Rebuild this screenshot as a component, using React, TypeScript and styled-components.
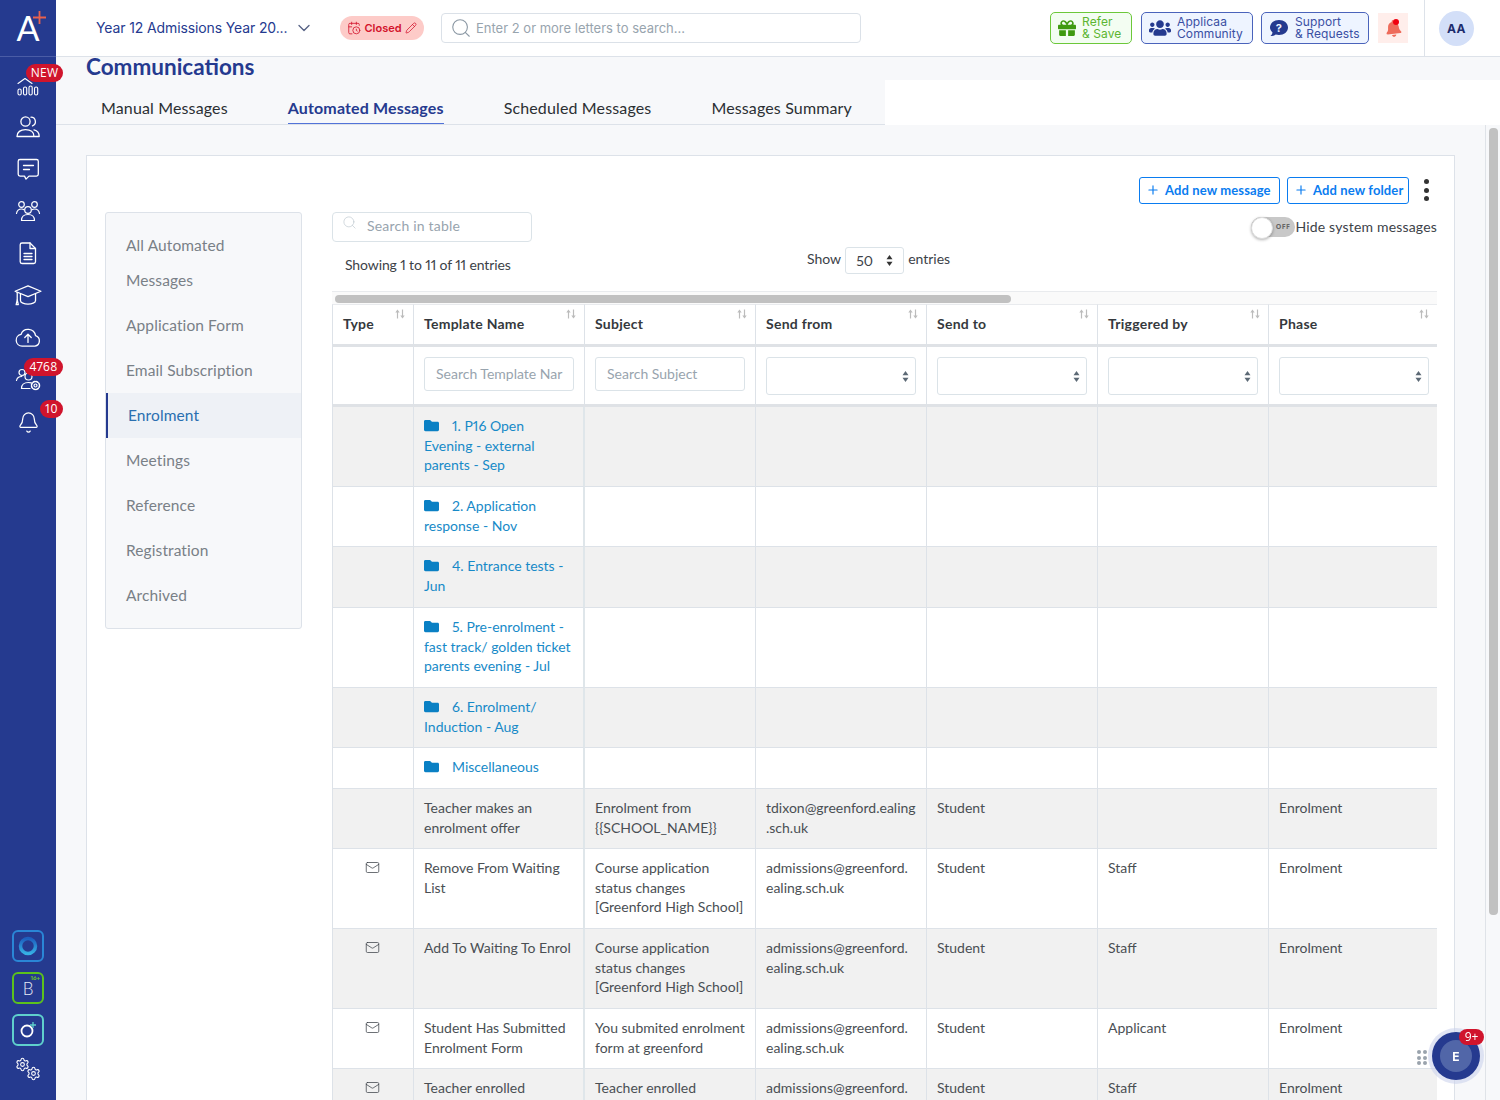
import React from 'react';
import styled, { createGlobalStyle } from 'styled-components';
import { Bell, CalendarClock, ChevronDown, Mail, Pencil, Plus, Search, Settings } from 'lucide-react';
import { FaBell, FaFolder, FaGift, FaUsers } from 'react-icons/fa';

const GlobalStyle = createGlobalStyle`
  html, body { margin: 0; padding: 0; height: 100%; overflow: hidden; }
  body { font-family: Lato, "Open Sans", sans-serif; font-size: 14px; color: #3c4248; background: #f7f8fa; font-variant-numeric: proportional-nums; }
  * { box-sizing: border-box; }
`;

/* ---------- shell ---------- */
const Shell = styled.div`
  display: flex;
  width: 1500px;
  height: 1100px;
  overflow: hidden;
`;

const Side = styled.aside`
  width: 56px;
  flex: none;
  background: #253a8f;
  display: flex;
  flex-direction: column;
  align-items: center;
  padding-bottom: 16px;
`;

const Logo = styled.div`
  width: 100%;
  height: 57px;
  flex: none;
  border-bottom: 1px solid #4a5ca6;
  display: flex;
  align-items: center;
  justify-content: center;
  margin-bottom: 7px;
  position: relative;
`;

const LogoMark = styled.span`
  font-family: Lato, sans-serif;
  font-weight: 400;
  font-size: 34px;
  line-height: 36px;
  color: #fff;
`;

const LogoPlus = styled.svg`
  position: absolute;
  left: 33px;
  top: 11px;
`;

const NavItem = styled.div`
  position: relative;
  width: 100%;
  height: 42px;
  flex: none;
  display: flex;
  align-items: center;
  justify-content: center;
  color: #fff;
`;

const NavBadge = styled.span<{ $w: number }>`
  position: absolute;
  right: -7px;
  top: 0;
  width: ${p => p.$w}px;
  height: 18px;
  border-radius: 9px;
  background: #d0142c;
  color: #fff;
  font-family: "Open Sans", sans-serif;
  font-size: 12px;
  line-height: 18px;
  letter-spacing: 0.3px;
  text-align: center;
  z-index: 2;
`;

const NavBell = styled(Bell)`
  margin-top: 3px;
`;

const NavFoot = styled.div`
  margin-top: auto;
  width: 100%;
  display: flex;
  flex-direction: column;
  align-items: center;
`;

const AppTile = styled.div<{ $c: string }>`
  width: 32px;
  height: 32px;
  border: 2px solid ${p => p.$c};
  border-radius: 6px;
  margin-bottom: 10px;
  display: flex;
  align-items: center;
  justify-content: center;
  color: #e6e9f5;
  font-size: 17px;
  font-weight: 300;
  position: relative;
`;

const TinyMark = styled.span`
  position: absolute;
  top: 0;
  right: 2px;
  font-size: 6px;
  line-height: 8px;
  font-weight: 700;
  color: #6fce22;
`;

const Main = styled.div`
  flex: 1;
  min-width: 0;
  display: flex;
  flex-direction: column;
`;

/* ---------- top bar ---------- */
const TopBar = styled.header`
  height: 57px;
  flex: none;
  background: #fff;
  border-bottom: 1px solid #dde2e9;
  display: flex;
  align-items: center;
  padding-left: 40px;
`;

const YearSelect = styled.div`
  display: flex;
  align-items: center;
  gap: 7px;
  width: 244px;
  margin-top: -1px;
  font-family: Inter, sans-serif;
  font-size: 14px;
  letter-spacing: -0.12px;
  color: #253a8f;
  white-space: nowrap;
`;

const ClosedPill = styled.div`
  width: 84px;
  height: 24px;
  border-radius: 12px;
  background: #fdcbc8;
  color: #d3132c;
  display: flex;
  align-items: center;
  justify-content: center;
  gap: 3px;
  font-family: Inter, sans-serif;
  font-size: 11px;
  font-weight: 600;
  margin-right: 17px;
`;

const TopSearch = styled.div`
  width: 420px;
  height: 30px;
  border: 1px solid #dbe1e8;
  border-radius: 4px;
  display: flex;
  align-items: center;
  gap: 4px;
  padding-left: 8px;
  color: #98a4ae;
  font-family: Inter, sans-serif;
  font-size: 13px;
`;

const TopLinks = styled.div`
  margin-left: auto;
  display: flex;
  align-items: center;
  height: 100%;
`;

const LinkBtn = styled.div<{ $w: number; $mr: number; $green?: boolean }>`
  width: ${p => p.$w}px;
  height: 32px;
  margin-right: ${p => p.$mr}px;
  border: 1px solid ${p => (p.$green ? '#6cc83a' : '#4a63bb')};
  border-radius: 5px;
  background: ${p => (p.$green ? '#f3fdf2' : '#eef4ff')};
  color: ${p => (p.$green ? '#5cb531' : '#3a4fa3')};
  display: flex;
  align-items: center;
  gap: 6px;
  padding-left: 7px;
  font-family: Inter, sans-serif;
  font-size: 12px;
  line-height: 12px;
  letter-spacing: 0.1px;
`;

const BellBox = styled.div`
  position: relative;
  width: 30px;
  height: 30px;
  background: #ffeeeb;
  color: #ee6c5b;
  display: flex;
  align-items: center;
  justify-content: center;
  margin-right: 16px;
`;

const BellDot = styled.span`
  position: absolute;
  top: 6px;
  right: 9px;
  width: 6px;
  height: 6px;
  border-radius: 50%;
  background: #f0000f;
`;

const AvatarCell = styled.div`
  height: 100%;
  width: 76px;
  border-left: 1px solid #dde2e9;
  display: flex;
  align-items: center;
  padding-left: 14px;
`;

const Avatar = styled.div`
  width: 35px;
  height: 35px;
  border-radius: 50%;
  background: #d3dff8;
  color: #1d2c6d;
  font-family: Inter, sans-serif;
  font-size: 12px;
  font-weight: 700;
  display: flex;
  align-items: center;
  justify-content: center;
  letter-spacing: 0.5px;
`;

/* ---------- page head ---------- */
const TitleBand = styled.div`
  height: 23px;
  flex: none;
  padding-left: 30px;
  background: #f7f8fa;
`;

const Title = styled.h1`
  margin: 0;
  font-size: 22.5px;
  line-height: 19px;
  font-weight: 700;
  color: #253a8f;
`;

const TabBand = styled.div`
  height: 45px;
  flex: none;
  display: flex;
  background: #fff;
`;

const Tabs = styled.nav`
  width: 829px;
  background: #f7f8fa;
  border-bottom: 1px solid #dde2e9;
  display: flex;
  gap: 60px;
  padding-left: 45px;
`;

const Tab = styled.div<{ $active?: boolean }>`
  height: 44px;
  padding-top: 18px;
  font-size: 16px;
  line-height: 20px;
  letter-spacing: 0.14px;
  white-space: nowrap;
  color: ${p => (p.$active ? '#253a8f' : '#2b2f33')};
  font-weight: ${p => (p.$active ? 700 : 400)};
  border-bottom: ${p => (p.$active ? '1px solid #5273d8' : 'none')};
`;

const Body = styled.div`
  flex: 1;
  min-height: 0;
  display: flex;
`;

const Scroller = styled.div`
  flex: 1;
  min-width: 0;
  padding: 30px 30px 0 30px;
  overflow: hidden;
`;

const Rail = styled.div`
  width: 15px;
  flex: none;
  border-left: 1px solid #dfe3e8;
  padding: 3px 2px 0 3px;
`;

const RailThumb = styled.div`
  height: 787px;
  border-radius: 4px;
  background: #c1c1c1;
`;

/* ---------- card ---------- */
const Card = styled.section`
  background: #fff;
  border: 1px solid #dde2e9;
  min-height: 1000px;
  padding: 21px 17px 0 18px;
`;

const Actions = styled.div`
  height: 35px;
  display: flex;
  justify-content: flex-end;
  align-items: flex-start;
  gap: 7px;
  padding-right: 28px;
  position: relative;
`;

const AddBtn = styled.div<{ $w: number }>`
  width: ${p => p.$w}px;
  height: 27px;
  padding: 0 0 1px 6px;
  border: 1px solid #0a7cf0;
  border-radius: 3px;
  color: #0a7cf0;
  display: flex;
  align-items: center;
  gap: 5px;
  font-size: 13px;
  font-weight: 700;
  letter-spacing: 0.12px;
  white-space: nowrap;
`;

const Dots = styled.div`
  position: absolute;
  right: 8px;
  top: 2px;
  display: flex;
  flex-direction: column;
  gap: 3.5px;
  & span { width: 5px; height: 5px; border-radius: 50%; background: #333; }
`;

const Columns = styled.div`
  display: flex;
  gap: 30px;
  align-items: flex-start;
`;

const Menu = styled.div`
  width: 197px;
  flex: none;
  background: #f7f8fa;
  border: 1px solid #dde2e9;
  border-radius: 3px;
  padding: 9.5px 0 10.5px;
`;

const MenuItem = styled.div<{ $active?: boolean }>`
  padding: 5px 20px;
  font-size: 15.5px;
  line-height: 35px;
  letter-spacing: 0.1px;
  color: ${p => (p.$active ? '#2a6fb0' : '#798087')};
  background: ${p => (p.$active ? '#eef1f6' : 'transparent')};
  border-left: ${p => (p.$active ? '2px solid #253a8f' : 'none')};
`;

const Content = styled.div`
  width: 1105px;
  flex: none;
`;

const Controls = styled.div`
  height: 79px;
  display: flex;
`;

const LeftCtl = styled.div`
  width: 475px;
  flex: none;
`;

const TableSearch = styled.div`
  width: 200px;
  height: 30px;
  border: 1px solid #dbe3e8;
  border-radius: 4px;
  display: flex;
  align-items: flex-start;
  gap: 10px;
  padding: 2px 0 0 9px;
  color: #98a4ae;
  font-size: 14px;
  line-height: 22px;
  letter-spacing: 0.2px;
`;

const EntriesInfo = styled.div`
  margin: 13px 0 0 13px;
  font-size: 14px;
  line-height: 19px;
  letter-spacing: -0.12px;
  color: #3c4248;
`;

const ShowCtl = styled.div`
  margin-top: 35px;
  height: 27px;
  display: flex;
  align-items: flex-start;
  gap: 4px;
  font-size: 14px;
  line-height: 24px;
`;

const ShowSelect = styled.div`
  width: 59px;
  height: 27px;
  border: 1px solid #dbe3e8;
  border-radius: 3px;
  display: flex;
  align-items: center;
  justify-content: space-between;
  padding: 0 10px;
  font-size: 14px;
`;

const ToggleCtl = styled.div`
  margin-left: auto;
  margin-top: 5px;
  height: 20px;
  display: flex;
  align-items: center;
  font-size: 14px;
  line-height: 18px;
  letter-spacing: 0.18px;
  white-space: nowrap;
`;

const Toggle = styled.div`
  width: 44px;
  height: 20px;
  border-radius: 10px;
  background: #c8c8c8;
  position: relative;
  font-family: "Open Sans", sans-serif;
  font-size: 7px;
  font-weight: 700;
  line-height: 20px;
  color: #666;
  text-align: right;
  padding-right: 5px;
  letter-spacing: 0.5px;
  &::before {
    content: '';
    position: absolute;
    left: 0;
    top: 0;
    width: 20px;
    height: 20px;
    border-radius: 50%;
    background: #fff;
    border: 1px solid #ddd;
    box-shadow: 0 1px 3px rgba(0, 0, 0, 0.3);
  }
`;

const HScroll = styled.div`
  height: 13px;
  background: #fafafa;
  border-top: 1px solid #e9ebee;
  padding: 3px 0 0 3px;
`;

const HThumb = styled.div`
  width: 676px;
  height: 8px;
  border-radius: 4px;
  background: #c1c1c1;
`;

/* ---------- table ---------- */
const Table = styled.table`
  width: 1105px;
  table-layout: fixed;
  border-collapse: separate;
  border-spacing: 0;
  font-size: 14px;
  line-height: 19.5px;
  color: #4a4f54;
`;

const Th = styled.th`
  height: 43px;
  padding: 0 8px 2px 10px;
  border-top: 1px solid #e9ebee;
  border-right: 1px solid #dde2e8;
  border-bottom: 3px solid #dfe2e6;
  text-align: left;
  color: #35393d;
  font-weight: 700;
  letter-spacing: 0.25px;
  &:first-child { border-left: 1px solid #dde2e8; }
  &:last-child { border-right: none; }
`;

const ThInner = styled.div`
  display: flex;
  justify-content: space-between;
  align-items: flex-start;
`;

const SortMark = styled.svg`
  margin-top: -5px;
  flex: none;
`;

const FilterTd = styled.td`
  height: 60px;
  padding: 10px 10px 0;
  vertical-align: top;
  border-right: 1px solid #dde2e8;
  border-bottom: 3px solid #dfe2e6;
  &:first-child { border-left: 1px solid #dde2e8; }
  &:last-child { border-right: none; padding-right: 8px; }
`;

const FilterInput = styled.div`
  height: 34px;
  border: 1px solid #dbe3e8;
  border-radius: 3px;
  padding: 0 10px 0 11px;
  font-size: 14px;
  line-height: 32px;
  color: #98a4ae;
  white-space: nowrap;
  overflow: hidden;
`;

const FilterSelect = styled.div`
  height: 38px;
  border: 1px solid #dbe3e8;
  border-radius: 3px;
  display: flex;
  align-items: center;
  justify-content: flex-end;
  padding-right: 6px;
`;

const Tr = styled.tr<{ $shade: boolean; $h: number }>`
  height: ${p => p.$h}px;
  background: ${p => (p.$shade ? '#f1f1f1' : '#fff')};
`;

const Td = styled.td<{ $wide?: boolean; $center?: boolean }>`
  padding: 9px 10px 0;
  vertical-align: top;
  border-right: ${p => (p.$wide ? '2px solid #dfe6ea' : '1px solid #dde2e8')};
  border-bottom: 1px solid #dde2e8;
  text-align: ${p => (p.$center ? 'center' : 'left')};
  white-space: nowrap;
  &:first-child { border-left: 1px solid #dde2e8; }
  &:last-child { border-right: none; }
`;

const MailGlyph = styled(Mail)`
  margin: 2px 1px 0 0;
`;

const FolderLink = styled.span`
  color: #178ac8;
`;

const FolderGlyph = styled(FaFolder)`
  color: #0a80c4;
  width: 15px;
  height: 15px;
  margin-right: 13px;
  vertical-align: -2px;
`;

/* ---------- floating chat ---------- */
const Chat = styled.div`
  position: fixed;
  left: 1432px;
  top: 1032px;
  width: 48px;
  height: 48px;
  border-radius: 50%;
  background: #253a8f;
  box-shadow: 0 0 0 4px rgba(200, 208, 235, 0.55);
  display: flex;
  align-items: center;
  justify-content: center;
`;

const ChatInner = styled.div`
  width: 32px;
  height: 32px;
  border-radius: 50%;
  background: #5166a8;
  color: #fff;
  font-family: Inter, sans-serif;
  font-size: 12px;
  font-weight: 700;
  display: flex;
  align-items: center;
  justify-content: center;
`;

const ChatBadge = styled.span`
  position: absolute;
  left: 27px;
  top: -3px;
  width: 25px;
  height: 16px;
  border-radius: 8px;
  background: #d0142c;
  color: #fff;
  font-family: "Open Sans", sans-serif;
  font-size: 12px;
  line-height: 16px;
  text-align: center;
`;

const Grip = styled.div`
  position: fixed;
  left: 1417px;
  top: 1050px;
  display: grid;
  grid-template-columns: repeat(2, 4px);
  gap: 1.5px 2px;
  & span { width: 4px; height: 4px; border-radius: 50%; background: #9aa3ad; }
`;

/* ---------- icons ---------- */
const Ico: React.FC<{ children: React.ReactNode; size?: number; sw?: number }> = ({ children, size = 26, sw = 1.3 }) => (
  <svg width={size} height={size} viewBox="0 0 26 26" fill="none" stroke="currentColor" strokeWidth={sw} strokeLinecap="round" strokeLinejoin="round">
    {children}
  </svg>
);

const SortArrows = () => (
  <SortMark width="10" height="10" viewBox="0 0 10 10" fill="#bcbcbc" stroke="#bcbcbc">
    <path d="M2.5 9.5V2" strokeWidth="1.2" />
    <path d="M0.3 3.4L2.5 0.6l2.2 2.8z" stroke="none" />
    <path d="M7.5 0.5V8" strokeWidth="1.2" />
    <path d="M5.3 6.6L7.5 9.4l2.2-2.8z" stroke="none" />
  </SortMark>
);

const UpDown = ({ color = '#5c6975' }: { color?: string }) => (
  <svg width="7" height="13" viewBox="0 0 7 13" fill={color}>
    <path d="M3.5 1L6.5 5.3H.5z" />
    <path d="M3.5 12L.5 7.7h6z" />
  </svg>
);

const navIcons: { icon: React.ReactNode; badge?: string; w?: number }[] = [
  {
    badge: 'NEW',
    w: 37,
    icon: (
      <Ico sw={1.1}>
        <path d="M3 11.500l7-5 7 5" />
        <rect x="3" y="17" width="3.200" height="6" rx="1.600" />
        <rect x="8.500" y="15" width="3.200" height="8" rx="1.600" />
        <rect x="14" y="14" width="3.200" height="9" rx="1.600" />
        <rect x="19.500" y="15" width="3.200" height="8" rx="1.600" />
      </Ico>
    ),
  },
  {
    icon: (
      <Ico>
        <circle cx="10.500" cy="7.500" r="4.600" />
        <path d="M2 22.500c0-4.600 3.500-6.800 8.500-6.800s8.500 2.200 8.500 6.800z" />
        <path d="M16 3.200a4.500 4.500 0 0 1 1.500 8.700" />
        <path d="M19 15.800c3 .7 5.200 3 5.200 6.700H19.500" />
      </Ico>
    ),
  },
  {
    icon: (
      <Ico>
        <path d="M5 3.500h16.500a1.800 1.800 0 0 1 1.800 1.800v13a1.800 1.800 0 0 1-1.800 1.800H14l-3 3-1.500-3H5a1.800 1.800 0 0 1-1.800-1.800v-13A1.800 1.800 0 0 1 5 3.500z" />
        <path d="M8.500 9.500h10M8.500 13.500h6" />
      </Ico>
    ),
  },
  {
    icon: (
      <Ico sw={1.2}>
        <circle cx="6.500" cy="6.500" r="2.800" />
        <circle cx="19.500" cy="6.500" r="2.800" />
        <circle cx="13" cy="12" r="3.300" />
        <path d="M1.500 15.500c.5-3 2.500-4.500 5-4.500 1 0 1.800.2 2.500.7" />
        <path d="M24.500 15.500c-.5-3-2.500-4.500-5-4.500-1 0-1.800.2-2.500.7" />
        <path d="M6.500 22.500c0-4 2.700-6 6.500-6s6.500 2 6.500 6z" />
      </Ico>
    ),
  },
  {
    icon: (
      <Ico>
        <path d="M7 3h8l5.500 5.500v13.200a1.800 1.800 0 0 1-1.800 1.800H7a1.800 1.800 0 0 1-1.800-1.800V4.800A1.800 1.800 0 0 1 7 3z" />
        <path d="M15 3v5.500h5.500" />
        <path d="M9 13.500h8M9 16.500h8M9 19.500h8" />
      </Ico>
    ),
  },
  {
    icon: (
      <Ico size={28} sw={1.2}>
        <path d="M13 4.500L25 9.500 13 14.500 1 9.500z" />
        <path d="M6 12v6c0 2.200 3.500 3.500 7 3.500s7-1.300 7-3.500v-6" />
        <path d="M3 10.500v7" />
        <path d="M2 22l1-4.500 1 4.500z" />
      </Ico>
    ),
  },
  {
    icon: (
      <Ico size={28} sw={1.2}>
        <path d="M7.500 21.500a5.500 5.500 0 0 1-1-10.900 7 7 0 0 1 13.500 1.200 5 5 0 0 1-.5 9.700z" />
        <path d="M13 18v-7M10 13.500l3-3 3 3" />
      </Ico>
    ),
  },
  {
    badge: '4768',
    w: 39,
    icon: (
      <Ico sw={1.2}>
        <circle cx="7" cy="6.500" r="3" />
        <circle cx="13.500" cy="10.500" r="3.500" />
        <path d="M1.500 14.500c.5-2.800 2.700-4 5.300-4" />
        <path d="M6.500 22.500c0-3.800 2.800-6 7-6 1 0 2 .1 2.800.4" />
        <path d="M6.500 22.500h8.500" />
        <circle cx="20.500" cy="19.500" r="1.500" />
        <circle cx="20.500" cy="19.500" r="4" strokeDasharray="2 1.150" strokeWidth={1.5} />
      </Ico>
    ),
  },
  { badge: '10', w: 23, icon: <NavBell size={23} strokeWidth={1.3} /> },
];

/* ---------- data ---------- */
const EM = 'Enrolment';
const adm = (
  <>
    admissions@greenford.
    <br />
    ealing.sch.uk
  </>
);
const courseSubject = (
  <>
    Course application
    <br />
    status changes
    <br />
    [Greenford High School]
  </>
);

const folders: { h: number; text: React.ReactNode }[] = [
  { h: 80, text: <>1. P16 Open<br />Evening - external<br />parents - Sep</> },
  { h: 60, text: <>2. Application<br />response - Nov</> },
  { h: 61, text: <>4. Entrance tests -<br />Jun</> },
  { h: 80, text: <>5. Pre-enrolment -<br />fast track/ golden ticket<br />parents evening - Jul</> },
  { h: 60, text: <>6. Enrolment/<br />Induction - Aug</> },
  { h: 41, text: <>Miscellaneous</> },
];

const messages: {
  h: number;
  mail: boolean;
  name: React.ReactNode;
  subject: React.ReactNode;
  from: React.ReactNode;
  to: string;
  by: string;
}[] = [
  {
    h: 60,
    mail: false,
    name: <>Teacher makes an<br />enrolment offer</>,
    subject: <>Enrolment from<br />{'{{SCHOOL_NAME}}'}</>,
    from: <>tdixon@greenford.ealing<br />.sch.uk</>,
    to: 'Student',
    by: '',
  },
  { h: 80, mail: true, name: <>Remove From Waiting<br />List</>, subject: courseSubject, from: adm, to: 'Student', by: 'Staff' },
  { h: 80, mail: true, name: <>Add To Waiting To Enrol</>, subject: courseSubject, from: adm, to: 'Student', by: 'Staff' },
  {
    h: 60,
    mail: true,
    name: <>Student Has Submitted<br />Enrolment Form</>,
    subject: <>You submited enrolment<br />form at greenford</>,
    from: adm,
    to: 'Student',
    by: 'Applicant',
  },
  { h: 31, mail: true, name: <>Teacher enrolled</>, subject: <>Teacher enrolled</>, from: <>admissions@greenford.</>, to: 'Student', by: 'Staff' },
];

const headers = ['Type', 'Template Name', 'Subject', 'Send from', 'Send to', 'Triggered by', 'Phase'];
const widths = [82, 171, 171, 171, 171, 171, 168];
const menuItems = ['Application Form', 'Email Subscription', 'Enrolment', 'Meetings', 'Reference', 'Registration', 'Archived'];

const App: React.FC = () => (
  <Shell>
    <GlobalStyle />
    <Side>
      <Logo>
        <LogoMark>A</LogoMark>
        <LogoPlus width="13" height="13" viewBox="0 0 13 13">
          <path d="M6.500 0v13M0 6.500h13" stroke="#e8614d" strokeWidth="1.800" />
        </LogoPlus>
      </Logo>
      {navIcons.map((n, i) => (
        <NavItem key={i}>
          {n.icon}
          {n.badge && <NavBadge $w={n.w ?? 20}>{n.badge}</NavBadge>}
        </NavItem>
      ))}
      <NavFoot>
        <AppTile $c="#2a86d6">
          <svg width="22" height="22" viewBox="0 0 22 22" fill="none">
            <defs>
              <linearGradient id="ringGrad" x1="0" y1="0" x2="0" y2="1">
                <stop offset="0" stopColor="#1d5fbf" />
                <stop offset="1" stopColor="#35b0e4" />
              </linearGradient>
            </defs>
            <circle cx="11" cy="11" r="7.500" stroke="url(#ringGrad)" strokeWidth="3.500" />
          </svg>
        </AppTile>
        <AppTile $c="#5cc21c">
          B<TinyMark>16+</TinyMark>
        </AppTile>
        <AppTile $c="#5fd0cc">
          <svg width="22" height="22" viewBox="0 0 22 22" fill="none">
            <circle cx="10" cy="12" r="5.500" stroke="#fff" strokeWidth="1.800" />
            <path d="M16 3v6M13 6h6" stroke="#5fd0cc" strokeWidth="1.300" />
          </svg>
        </AppTile>
        <svg width="28" height="28" viewBox="0 0 28 28" fill="none">
          <Settings x="1" y="1" width="15" height="15" strokeWidth={1.7} color="#fff" />
          <Settings x="12" y="10" width="15" height="15" strokeWidth={1.7} color="#fff" />
        </svg>
      </NavFoot>
    </Side>

    <Main>
      <TopBar>
        <YearSelect>
          Year 12 Admissions Year 20...
          <ChevronDown size={20} color="#566285" strokeWidth={1.6} />
        </YearSelect>
        <ClosedPill>
          <CalendarClock size={14} strokeWidth={1.4} />
          Closed
          <Pencil size={12} strokeWidth={1.5} />
        </ClosedPill>
        <TopSearch>
          <Search size={22} strokeWidth={1.2} color="#8b98a4" />
          Enter 2 or more letters to search...
        </TopSearch>
        <TopLinks>
          <LinkBtn $w={82} $mr={9} $green>
            <FaGift size={18} color="#3f9a10" />
            <span>Refer<br />&amp; Save</span>
          </LinkBtn>
          <LinkBtn $w={112} $mr={8}>
            <FaUsers size={22} color="#253a8f" />
            <span>Applicaa<br />Community</span>
          </LinkBtn>
          <LinkBtn $w={108} $mr={9}>
            <svg width="20" height="18" viewBox="0 0 20 18">
              <path d="M10 1c5 0 9 3 9 7.500S15 16 10 16c-1.200 0-2.300-.2-3.300-.5C5.500 16.500 3.500 17 1.500 17c1-1 1.800-2.200 2-3.600C2 12 1 10.300 1 8.500 1 4 5 1 10 1z" fill="#253a8f" />
              <text x="10" y="12.500" textAnchor="middle" fontSize="11" fontWeight="700" fill="#eef4ff" fontFamily="Inter, sans-serif">?</text>
            </svg>
            <span>Support<br />&amp; Requests</span>
          </LinkBtn>
          <BellBox>
            <FaBell size={17} style={{ transform: 'rotate(-6deg)' }} />
            <BellDot />
          </BellBox>
          <AvatarCell>
            <Avatar>AA</Avatar>
          </AvatarCell>
        </TopLinks>
      </TopBar>

      <TitleBand>
        <Title>Communications</Title>
      </TitleBand>
      <TabBand>
        <Tabs>
          <Tab>Manual Messages</Tab>
          <Tab $active>Automated Messages</Tab>
          <Tab>Scheduled Messages</Tab>
          <Tab>Messages Summary</Tab>
        </Tabs>
      </TabBand>

      <Body>
        <Scroller>
          <Card>
            <Actions>
              <AddBtn $w={141}>
                <Plus size={14} strokeWidth={2} /> <span>Add new message</span>
              </AddBtn>
              <AddBtn $w={122}>
                <Plus size={14} strokeWidth={2} /> <span>Add new folder</span>
              </AddBtn>
              <Dots>
                <span />
                <span />
                <span />
              </Dots>
            </Actions>
            <Columns>
              <Menu>
                <MenuItem>All Automated<br />Messages</MenuItem>
                {menuItems.map(m => (
                  <MenuItem key={m} $active={m === 'Enrolment'}>{m}</MenuItem>
                ))}
              </Menu>
              <Content>
                <Controls>
                  <LeftCtl>
                    <TableSearch>
                      <Search size={15} strokeWidth={1} color="#b9c3cb" />
                      Search in table
                    </TableSearch>
                    <EntriesInfo>Showing 1 to 11 of 11 entries</EntriesInfo>
                  </LeftCtl>
                  <ShowCtl>
                    Show
                    <ShowSelect>
                      50
                      <UpDown color="#333" />
                    </ShowSelect>
                    entries
                  </ShowCtl>
                  <ToggleCtl>
                    <Toggle>OFF</Toggle>
                    Hide system messages
                  </ToggleCtl>
                </Controls>
                <HScroll>
                  <HThumb />
                </HScroll>
                <Table>
                  <colgroup>
                    {widths.map((w, i) => (
                      <col key={i} width={w} />
                    ))}
                  </colgroup>
                  <thead>
                    <tr>
                      {headers.map(h => (
                        <Th key={h}>
                          <ThInner>
                            {h}
                            <SortArrows />
                          </ThInner>
                        </Th>
                      ))}
                    </tr>
                    <tr>
                      <FilterTd />
                      <FilterTd><FilterInput>Search Template Nar</FilterInput></FilterTd>
                      <FilterTd><FilterInput>Search Subject</FilterInput></FilterTd>
                      {[0, 1, 2, 3].map(i => (
                        <FilterTd key={i}>
                          <FilterSelect><UpDown /></FilterSelect>
                        </FilterTd>
                      ))}
                    </tr>
                  </thead>
                  <tbody>
                    {folders.map((f, i) => (
                      <Tr key={i} $shade={i % 2 === 0} $h={f.h}>
                        <Td />
                        <Td $wide>
                          <FolderLink>
                            <FolderGlyph />
                            {f.text}
                          </FolderLink>
                        </Td>
                        <Td /><Td /><Td /><Td /><Td />
                      </Tr>
                    ))}
                    {messages.map((m, i) => (
                      <Tr key={i} $shade={i % 2 === 0} $h={m.h}>
                        <Td $center>{m.mail && <MailGlyph size={15} strokeWidth={1.2} color="#3c4248" />}</Td>
                        <Td $wide>{m.name}</Td>
                        <Td>{m.subject}</Td>
                        <Td>{m.from}</Td>
                        <Td>{m.to}</Td>
                        <Td>{m.by}</Td>
                        <Td>{EM}</Td>
                      </Tr>
                    ))}
                  </tbody>
                </Table>
              </Content>
            </Columns>
          </Card>
        </Scroller>
        <Rail>
          <RailThumb />
        </Rail>
      </Body>
    </Main>

    <Grip>
      {[0, 1, 2, 3, 4, 5].map(i => (
        <span key={i} />
      ))}
    </Grip>
    <Chat>
      <ChatInner>E</ChatInner>
      <ChatBadge>9+</ChatBadge>
    </Chat>
  </Shell>
);

export default App;
